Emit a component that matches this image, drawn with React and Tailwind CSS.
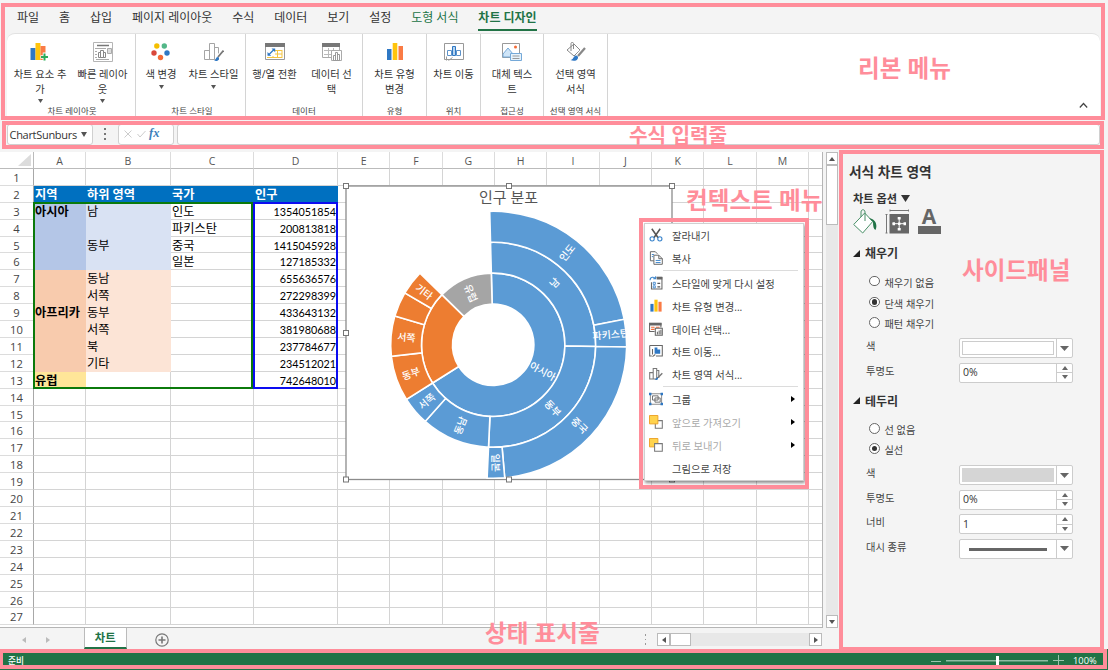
import { Fragment } from "react";

const TABS = ["파일", "홈", "삽입", "페이지 레이아웃", "수식", "데이터", "보기", "설정", "도형 서식", "차트 디자인"];

const COLUMNS = [
  { name: "A", width: 52 },
  { name: "B", width: 85 },
  { name: "C", width: 83 },
  { name: "D", width: 84 },
  { name: "E", width: 52.35 },
  { name: "F", width: 52.35 },
  { name: "G", width: 52.35 },
  { name: "H", width: 52.35 },
  { name: "I", width: 52.35 },
  { name: "J", width: 52.35 },
  { name: "K", width: 52.35 },
  { name: "L", width: 52.35 },
  { name: "M", width: 52.35 },
  { name: "", width: 14.3 },
];

const CELLS = {
  2: ["지역", "하위 영역", "국가", "인구"],
  3: ["아시아", "남", "인도", "1354051854"],
  4: ["", "", "파키스탄", "200813818"],
  5: ["", "동부", "중국", "1415045928"],
  6: ["", "", "일본", "127185332"],
  7: ["", "동남", "", "655636576"],
  8: ["", "서쪽", "", "272298399"],
  9: ["아프리카", "동부", "", "433643132"],
  10: ["", "서쪽", "", "381980688"],
  11: ["", "북", "", "237784677"],
  12: ["", "기타", "", "234512021"],
  13: ["유럽", "", "", "742648010"],
};

const ROWS = Array.from({ length: 27 }, (_, i) => i + 1);

function cellStyle(row, col) {
  if (row === 2 && col < 4) return "bg-[#0070c0] border-[#0070c0] text-white font-bold";
  if (row > 2 && row < 7 && col === 0) return "bg-[#b4c6e7] border-[#b4c6e7] font-bold";
  if (row > 2 && row < 7 && col === 1) return "bg-[#d9e2f3] border-[#d9e2f3]";
  if (row > 6 && row < 13 && col === 0) return "bg-[#f8cbad] border-[#f8cbad] font-bold";
  if (row > 6 && row < 13 && col === 1) return "bg-[#fce4d6] border-[#fce4d6]";
  if (row === 13 && col === 0) return "bg-[#ffe699] border-[#ffe699] font-bold";
  return "border-[#d4d4d4]";
}

/* ---------- ribbon icons ---------- */

const Icon = ({ size = 20, children }) => (
  <svg width={size} height={size} viewBox="0 0 20 20" fill="none" className="block shrink-0">
    {children}
  </svg>
);

const AddElementIcon = () => (
  <Icon>
    <path d="M.500 6h5v12h-5z" fill="#2f78c4" />
    <path d="M5.500 1h5v17h-5z" fill="#ffc40c" />
    <path d="M10.500 4h5v14h-5z" fill="#fa7b45" />
    <path d="M14.500 10.500v9M10.500 15h9" stroke="#fff" strokeWidth="3.500" />
    <path d="M14.500 11.500v7M11 15h7" stroke="#2eab5a" strokeWidth="2" />
  </Icon>
);

const QuickLayoutIcon = () => (
  <Icon>
    <path d="M.5.5h19v19H.5z" stroke="#b5b5b5" fill="#fff" />
    <path d="M4 3.500h12" stroke="#777" strokeWidth="1.500" />
    <path d="M2 6.500h11M2 9.500h2M2 12.500h2M2 15.500h2M3 17.500h13" stroke="#aaa" />
    <path d="M5.500 10.500h2v5h-2zM7.500 8.500h3v7h-3zM10.500 10.500h2v5h-2z" stroke="#888" />
    <path d="M14.500 6.500h4v5h-4z" stroke="#aaa" fill="#ddd" />
  </Icon>
);

const ColorsIcon = () => (
  <Icon>
    <circle cx="5.800" cy="4" r="2.700" fill="#f5bf00" />
    <circle cx="13.300" cy="4" r="2.700" fill="#52b788" />
    <circle cx="3" cy="11" r="2.700" fill="#d9483b" />
    <circle cx="16" cy="11" r="2.700" fill="#2f78c4" />
    <circle cx="9.500" cy="15.500" r="2.700" fill="#f46a35" />
  </Icon>
);

const BarsOutline = () => (
  <path d="M.5 8.500h5v9h-5zM5.500 1.500h5v16h-5zM10.500 5.500h4v12h-4z" stroke="#a5a5a5" fill="#fff" />
);

const ChartStyleIcon = ({ size }) => (
  <Icon size={size}>
    <BarsOutline />
    <path d="M19.500 8.500 14 15" stroke="#fff" strokeWidth="4" />
    <path d="M19.500 8.500 14 15" stroke="#777" strokeWidth="1.800" />
    <path d="M10 18.500c2 0 1.500-3 3.500-3.500 2 0 2 3 0 3.700-1 .5-2.500.3-3.500-.2z" fill="#2f78c4" />
  </Icon>
);

const SwitchRowIcon = () => (
  <Icon>
    <path d="M.5 1.500h19v16H.5z" stroke="#999" fill="#fff" />
    <path d="M0 1h20v4H0z" fill="#777" />
    <path d="M6 8.500h11M6 12h11M2 15.500h15M8 8v8M12.500 8v8M17 8v8" stroke="#f5c542" />
    <path d="M2.500 6.500h7.500V14H2.500z" fill="#fff" />
    <path d="m3.500 13 5.500-5.500" stroke="#2f78c4" strokeWidth="1.300" />
    <path d="M6.500 6.500h3.700v3.700zM2.500 10v3.700h3.700z" fill="#2f78c4" />
  </Icon>
);

const SelectDataIcon = () => (
  <Icon>
    <path d="M.5 1.500h17v14H.5z" stroke="#aaa" fill="#fff" />
    <path d="M0 1h18v4H0z" fill="#777" />
    <path d="M2 8.500h14M2 12.500h8M6.500 6v9M11.500 6v4" stroke="#bbb" />
    <path d="M9.500 8.500h10v10h-10z" fill="#fff" stroke="#aaa" />
    <path d="M11.500 13.500h2v5h-2zM13.500 10.500h2v8h-2zM15.500 12.500h2v6h-2z" stroke="#999" />
  </Icon>
);

const ChartTypeIcon = ({ size }) => (
  <Icon size={size}>
    <path d="M2 7h4.500v11H2z" fill="#2f78c4" />
    <path d="M7.700 1h4.600v17H7.700z" fill="#ffc40c" />
    <path d="M13.500 4H18v14h-4.500z" fill="#fa7b45" />
  </Icon>
);

const MoveChartIcon = ({ size }) => (
  <Icon size={size}>
    <path d="M.5 1.500h19v16H.5z" stroke="#999" fill="#fff" />
    <path d="M3.500 8.500h4v5h-4zM12.500 8.500h4v5h-4z" fill="#fff" stroke="#5d92c9" />
    <path d="M8.500 4.500h3v9h-3z" fill="#b5d3ef" stroke="#2f78c4" />
    <path d="M2.500 14.500v4M4.500 18.500l4-3" stroke="#999" />
  </Icon>
);

const AltTextIcon = () => (
  <Icon>
    <path d="M.5 1.500h17v14H.5z" stroke="#999" fill="#fff" />
    <path d="m1 12 5-6 5 6v3H1z" fill="#cfe5f8" stroke="#75a9d8" />
    <circle cx="13.500" cy="5" r="1.500" fill="#f46a35" />
    <path d="M8.500 11.500h11v7h-11z" fill="#e5f2fc" stroke="#75a9d8" />
    <path d="M10.500 14h7M10.500 16.500h7" stroke="#999" />
  </Icon>
);

const FormatSelectionIcon = () => (
  <Icon>
    <path d="m1 8 7-6 6 6-6 6z" fill="#fff" stroke="#888" />
    <path d="M5 9V1.500C5 0 7.500 0 7.500 1.500V7" stroke="#888" />
    <path d="m18.500 6-7 8" stroke="#fff" strokeWidth="4" />
    <path d="m19 6-7 8" stroke="#888" strokeWidth="2.200" />
    <path d="M4.500 18c3 0 2.500-4 5.500-4.500 3 .5 2.500 4 0 5-2 .7-4 .3-5.500-.5z" fill="#2f78c4" />
  </Icon>
);

/* ---------- context menu icons ---------- */

const CutIcon = () => (
  <Icon size={14}>
    <path d="m4 1 9 13M16 1 7 14" stroke="#555" strokeWidth="2.200" />
    <circle cx="4.500" cy="15.500" r="3" stroke="#3d86cc" strokeWidth="1.600" />
    <circle cx="15.500" cy="15.500" r="3" stroke="#3d86cc" strokeWidth="1.600" />
  </Icon>
);

const CopyIcon = () => (
  <Icon size={14}>
    <path d="M7 14H2V1h7l3 3" stroke="#666" strokeWidth="1.400" />
    <path d="M7 6h7l5 5v8H7z" fill="#fff" stroke="#666" strokeWidth="1.400" />
    <path d="M14 6v5h5" stroke="#666" strokeWidth="1.400" />
    <path d="M9.500 13.500h7M9.500 16.500h7M4 5h3M4 8h2" stroke="#3d86cc" strokeWidth="1.400" />
  </Icon>
);

const ResetStyleIcon = () => (
  <Icon size={14}>
    <path d="M11 2h7.500v16.500h-15V9" stroke="#666" strokeWidth="1.500" />
    <path d="M11 1h8v4h-8z" fill="#666" />
    <path d="M1.500 6c0-5 6-5.500 7.500-2M9.500.5V4H6" stroke="#3d86cc" strokeWidth="1.500" />
    <path d="M6 9h3v3H6zM6 14h3v3H6z" stroke="#3d86cc" strokeWidth="1.300" />
    <path d="M12 10.500h4M12 15.500h4" stroke="#555" strokeWidth="1.500" />
  </Icon>
);

const MenuDataIcon = () => (
  <Icon size={14}>
    <path d="M8 13.500H.8V2H17v6" stroke="#666" strokeWidth="1.500" />
    <path d="M0 1h18v4H0z" fill="#666" />
    <path d="M3 7.500h5M3 10.500h5M10 7.500h5" stroke="#f46a35" strokeWidth="1.600" />
    <path d="M9 9h10v10H9z" fill="#fff" stroke="#666" strokeWidth="1.500" />
    <path d="M12 18v-4M14.500 18v-6M17 18v-7" stroke="#666" strokeWidth="1.500" />
  </Icon>
);

const MenuMoveIcon = () => (
  <Icon size={14}>
    <path d="M1 2h18v15H10M4 17H1V2" stroke="#666" strokeWidth="1.500" />
    <path d="M8 5h4v3h4v6H8z" fill="#2f78c4" />
    <path d="M5 7v8M5 18l4-3" stroke="#666" strokeWidth="1.500" />
  </Icon>
);

const MenuFormatIcon = () => (
  <Icon size={14}>
    <path d="M1 8h5v9H1zM6 2h5v15H6zM11 5h3v10h-3z" stroke="#777" strokeWidth="1.500" />
    <path d="m19 9-6 6" stroke="#777" strokeWidth="2" />
    <path d="M8 17.500c2 0 2-2.500 4-2.500 2 .5 1 3-1 3.500-1 .2-2-.2-3-1z" fill="#2f78c4" />
  </Icon>
);

const GroupIcon = () => (
  <Icon size={14}>
    <path d="M2 2.500h16v15H2z" stroke="#777" strokeWidth="1.200" />
    <path d="M5 5.500h8v6H5zM8.500 8.500H16v6H8.500z" stroke="#666" strokeWidth="1.300" />
    <path d="M0 1h3.500v3.500H0zM16.500 1H20v3.500h-3.500zM0 15.500h3.500V19H0zM16.500 15.500H20V19h-3.500z" fill="#2f78c4" />
  </Icon>
);

const LayerIcon = ({ back }) => (
  <Icon size={14}>
    {back ? (
      <>
        <path d="M.7.700h12v12H.7z" fill="#ffd34d" stroke="#eda42b" strokeWidth="1.400" />
        <path d="M8 8h11v11H8z" fill="#fff" stroke="#777" strokeWidth="1.500" />
      </>
    ) : (
      <>
        <path d="M9 8h10v11H9z" fill="#fff" stroke="#777" strokeWidth="1.500" />
        <path d="M.7.700h12v12H.7z" fill="#ffd34d" stroke="#eda42b" strokeWidth="1.400" />
      </>
    )}
  </Icon>
);

const Triangle = ({ dir = "down", w = 6, h = 4, color = "#555" }) => {
  const points = { down: "0,0 10,0 5,10", up: "0,10 10,10 5,0", left: "10,0 10,10 0,5", right: "0,0 0,10 10,5" };
  return (
    <svg width={w} height={h} viewBox="0 0 10 10" preserveAspectRatio="none" className="block shrink-0">
      <polygon points={points[dir]} fill={color} />
    </svg>
  );
};

/* ---------- ribbon ---------- */

const GROUPS = [
  {
    label: "차트 레이아웃",
    style: "w-[129px] pl-0.5",
    items: [
      { icon: <AddElementIcon />, lines: ["차트 요소 추", "가"], arrow: true, style: "w-[62px]" },
      { icon: <QuickLayoutIcon />, lines: ["빠른 레이아", "웃"], arrow: true, style: "w-[63px]" },
    ],
  },
  {
    label: "차트 스타일",
    style: "w-[110px] pl-[3px]",
    items: [
      { icon: <ColorsIcon />, lines: ["색 변경"], arrow: true, style: "w-[44px]" },
      { icon: <ChartStyleIcon />, lines: ["차트 스타일"], arrow: true, style: "w-[61px]" },
    ],
  },
  {
    label: "데이터",
    style: "w-[117px]",
    items: [
      { icon: <SwitchRowIcon />, lines: ["행/열 전환"], style: "w-[57px]" },
      { icon: <SelectDataIcon />, lines: ["데이터 선", "택"], style: "w-[57px]" },
    ],
  },
  { label: "유형", style: "w-[64px]", items: [{ icon: <ChartTypeIcon />, lines: ["차트 유형", "변경"], style: "w-[63px]" }] },
  { label: "위치", style: "w-[54px]", items: [{ icon: <MoveChartIcon />, lines: ["차트 이동"], style: "w-[53px]" }] },
  { label: "접근성", style: "w-[63px]", items: [{ icon: <AltTextIcon />, lines: ["대체 텍스", "트"], style: "w-[62px]" }] },
  {
    label: "선택 영역 서식",
    style: "w-[64px]",
    items: [{ icon: <FormatSelectionIcon />, lines: ["선택 영역", "서식"], style: "w-[63px]" }],
  },
];

function Ribbon() {
  return (
    <>
      <nav className="flex h-[33px] shrink-0 gap-[19.900px] pt-[9px] pl-[17px] text-[12px] leading-[18px]">
        {TABS.map((tab, i) => (
          <span
            key={tab}
            className={`h-[22px] whitespace-nowrap ${
              i === 9 ? "border-b-2 border-[#217346] font-bold text-[#217346]" : i === 8 ? "text-[#217346]" : "text-[#333]"
            }`}
          >
            {tab}
          </span>
        ))}
      </nav>
      <div className="mr-[8px] ml-[7px] flex h-[83px] shrink-0 rounded-t-lg border-t border-[#e2e2e2] bg-white">
        {GROUPS.map((group) => (
          <div key={group.label} className={`flex flex-col justify-between border-r border-[#d4d4d4] ${group.style}`}>
            <div className="flex pt-[8px]">
              {group.items.map((item) => (
                <div key={item.lines[0]} className={`flex flex-col items-center ${item.style}`}>
                  {item.icon}
                  <div className="mt-[5px] text-center text-[10.3px] leading-[14.5px] whitespace-nowrap text-[#333]">
                    {item.lines.map((line) => (
                      <div key={line}>{line}</div>
                    ))}
                  </div>
                  {item.arrow && (
                    <div className="mt-[3px]">
                      <Triangle w={5} h={4} />
                    </div>
                  )}
                </div>
              ))}
            </div>
            <div className="-mt-3 h-[10px] text-center text-[8.5px] leading-[10px] whitespace-nowrap text-[#444]">{group.label}</div>
          </div>
        ))}
        <div className="flex flex-1 items-end justify-end pr-[12.500px] pb-[7px]">
          <svg width="9" height="7" viewBox="0 0 9 7" fill="none">
            <path d="m.8 5.500 3.700-4 3.700 4" stroke="#444" strokeWidth="1.200" />
          </svg>
        </div>
      </div>
    </>
  );
}

function FormulaBar() {
  return (
    <div className="flex h-[36px] shrink-0 items-center pr-[8px] pl-[7px]">
      <div className="flex h-[21px] w-[86px] items-center justify-between rounded-[3px] border border-[#d0d0d0] bg-white pr-[5px] pl-[1.500px]">
        <span className="pt-[2px] text-[11px] leading-[16px] tracking-[-0.3px] whitespace-nowrap text-[#333]">ChartSunburs</span>
        <Triangle w={6} h={5} />
      </div>
      <div className="flex w-[23px] flex-col items-center gap-[3px]">
        <i className="size-[2px] bg-[#777]" />
        <i className="size-[2px] bg-[#777]" />
        <i className="size-[2px] bg-[#777]" />
      </div>
      <div className="ml-[2px] flex h-[21px] w-[56px] items-center gap-[5px] rounded-[3px] border border-[#d0d0d0] bg-white pl-[5px]">
        <svg width="8" height="8" viewBox="0 0 8 8" stroke="#ccc">
          <path d="m.5.5 7 7m0-7-7 7" />
        </svg>
        <svg width="9" height="8" viewBox="0 0 9 8" fill="none" stroke="#ccc">
          <path d="m.5 4 2.500 3 5.500-6" />
        </svg>
        <span className="-mt-px -ml-0.5 font-['Liberation_Serif',serif] text-[12.500px] font-bold italic text-[#3c7fbb]">fx</span>
      </div>
      <div className="ml-[3px] h-[21px] flex-1 rounded-[3px] border border-[#d0d0d0] bg-white" />
    </div>
  );
}

/* ---------- sheet ---------- */

function Grid() {
  return (
    <div className="h-full w-[823px] overflow-hidden border-r border-b border-[#b5b5b5] bg-white">
      <div className="flex h-[16.9px] text-[10.5px] leading-[18px] text-[#555]">
        <div className="flex w-[34px] shrink-0 items-end justify-end border-r border-b border-[#bbb] pr-[2px] pb-[2px]">
          <svg width="13" height="12" viewBox="0 0 13 12">
            <path d="M13 0v12H0z" fill="#dcdcdc" />
          </svg>
        </div>
        {COLUMNS.map((col, i) => (
          <div key={i} className="shrink-0 border-r border-b border-r-[#dcdcdc] border-b-[#bbb] text-center" style={{ width: col.width }}>
            {col.name}
          </div>
        ))}
      </div>
      {ROWS.map((row) => (
        <div key={row} className="flex h-[16.92px] text-black">
          <div className="w-[34px] shrink-0 border-r border-b border-r-[#a8a8a8] border-b-[#dcdcdc] text-center text-[11.2px] leading-[18px] text-[#444]">
            {row}
          </div>
          {COLUMNS.map((col, i) => (
            <div
              key={i}
              className={`shrink-0 border-r border-b whitespace-nowrap ${cellStyle(row, i)} ${
                i === 3 && row > 2
                  ? "pr-[1px] text-right font-['Lato','Noto_Sans_CJK_KR',sans-serif] text-[10.8px] leading-[18px]"
                  : "pl-[1px] text-[12.2px] leading-[18px]"
              }`}
              style={{ width: col.width }}
            >
              {CELLS[row]?.[i]}
            </div>
          ))}
        </div>
      ))}
    </div>
  );
}

/* ---------- sunburst ---------- */

const BLUE = "#5b9bd5";
const ORANGE = "#ed7d31";
const RADII = [40.7, 71.7, 102.5, 133.5];
const TOTAL = 6055.6;

// ring, start and end on the running total (millions), fill, label
const SLICES = [
  [0, 0, 4025.03, BLUE, "아시아"],
  [0, 4025.03, 5312.95, ORANGE, ""],
  [0, 5312.95, 6055.6, "#a5a5a5", "유럽"],
  [1, 0, 1554.86, BLUE, "남"],
  [1, 1554.86, 3097.1, BLUE, "동부"],
  [1, 3097.1, 3752.73, BLUE, "동남"],
  [1, 3752.73, 4025.03, BLUE, "서쪽"],
  [1, 4025.03, 4458.67, ORANGE, "동부"],
  [1, 4458.67, 4840.65, ORANGE, "서쪽"],
  [1, 4840.65, 5078.44, ORANGE, ""],
  [1, 5078.44, 5312.95, ORANGE, "기타"],
  [2, 0, 1354.05, BLUE, "인도"],
  [2, 1354.05, 1554.86, BLUE, "파키스탄"],
  [2, 1554.86, 2969.91, BLUE, "중국"],
  [2, 2969.91, 3097.1, BLUE, "일본"],
];

const toAngle = (value) => (value / TOTAL) * 360 - 1.5;

const polar = (radius, angle) => {
  const rad = ((angle - 90) * Math.PI) / 180;
  return [radius * Math.cos(rad), radius * Math.sin(rad)];
};

function slicePath(ring, from, to) {
  const inner = RADII[ring];
  const outer = RADII[ring + 1];
  const large = to - from > 180 ? 1 : 0;
  return [
    `M${polar(outer, from)}`,
    `A${outer} ${outer} 0 ${large} 1 ${polar(outer, to)}`,
    `L${polar(inner, to)}`,
    `A${inner} ${inner} 0 ${large} 0 ${polar(inner, from)}Z`,
  ].join("");
}

function Sunburst() {
  const handles = [
    [0, 0], [163, 0], [326, 0], [0, 147], [326, 147], [0, 293.5], [163, 293.5], [326, 293.5],
  ];
  return (
    <svg width="334" height="302" viewBox="-4 -4 334 302" className="absolute top-[30px] left-[342px]">
      <rect x="0" y="0" width="326" height="293.5" fill="#fff" stroke="#8c8c8c" strokeWidth="1.300" />
      <text x="162.500" y="16.500" textAnchor="middle" fontSize="15" fill="#555">
        인구 분포
      </text>
      <g transform="translate(147.200 158.800)">
        {SLICES.map(([ring, start, end, fill], i) => (
          <path key={i} d={slicePath(ring, toAngle(start), toAngle(end))} fill={fill} stroke="#fff" strokeWidth="1.600" />
        ))}
        {SLICES.map(([ring, start, end, , label], i) => {
          const mid = (toAngle(start) + toAngle(end)) / 2;
          const [x, y] = polar((RADII[ring] + RADII[ring + 1]) / 2, mid);
          return (
            <text
              key={i}
              transform={`translate(${x} ${y}) rotate(${mid < 180 ? mid - 90 : mid + 90})`}
              y="3.700"
              textAnchor="middle"
              fontSize="10"
              fill="#fff"
              className="font-['Noto_Sans_CJK_KR',sans-serif] font-medium"
            >
              {label}
            </text>
          );
        })}
      </g>
      {handles.map(([x, y]) => (
        <rect key={`${x}-${y}`} x={x - 2.5} y={y - 2.5} width="5" height="5" fill="#fff" stroke="#777" />
      ))}
    </svg>
  );
}

/* ---------- context menu ---------- */

const MENU = [
  [
    { text: "잘라내기", icon: <CutIcon /> },
    { text: "복사", icon: <CopyIcon /> },
  ],
  [
    { text: "스타일에 맞게 다시 설정", icon: <ResetStyleIcon /> },
    { text: "차트 유형 변경...", icon: <ChartTypeIcon size={14} /> },
    { text: "데이터 선택...", icon: <MenuDataIcon /> },
    { text: "차트 이동...", icon: <MenuMoveIcon /> },
    { text: "차트 영역 서식...", icon: <MenuFormatIcon /> },
  ],
  [
    { text: "그룹", icon: <GroupIcon />, sub: true },
    { text: "앞으로 가져오기", icon: <LayerIcon />, sub: true, disabled: true },
    { text: "뒤로 보내기", icon: <LayerIcon back />, sub: true, disabled: true },
    { text: "그림으로 저장" },
  ],
];

function ContextMenu() {
  return (
    <div className="absolute top-[71px] left-[644px] w-[160px] border border-[#d0d0d0] bg-white shadow-[1px_2px_3px_rgba(0,0,0,0.45)]">
      {MENU.map((section, i) => (
        <Fragment key={i}>
          {i > 0 && <div className="mr-[5px] ml-[18px] h-[2px] border-t border-[#dcdcdc]" />}
          {section.map((item) => (
            <div key={item.text} className="flex h-[22.900px] items-center pr-[8px] pb-px pl-[4px]">
              <div className="w-[14px]">{item.icon}</div>
              <span
                className={`ml-[9px] flex-1 pt-[2px] text-[10.3px] leading-[14px] whitespace-nowrap ${
                  item.disabled ? "text-[#a9a9a9]" : "text-[#444]"
                }`}
              >
                {item.text}
              </span>
              {item.sub && <Triangle dir="right" w={4} h={6} color="#000" />}
            </div>
          ))}
        </Fragment>
      ))}
    </div>
  );
}

function VerticalScroll() {
  return (
    <div className="ml-[3px] flex w-[12px] flex-col bg-[#e8e8e8]">
      <div className="flex h-[13px] items-center justify-center border border-[#bbb] bg-white">
        <Triangle dir="up" w={6} h={4} />
      </div>
      <div className="h-[60px] border border-[#bbb] bg-white" />
      <div className="flex-1" />
      <div className="flex h-[13px] items-center justify-center border border-[#bbb] bg-white">
        <Triangle w={6} h={4} />
      </div>
    </div>
  );
}

function SheetTabs() {
  return (
    <div className="flex h-[21px] shrink-0 items-center bg-[#f4f4f4]">
      <div className="flex w-[83.500px] items-center gap-[20px] pt-[2px] pl-[22px]">
        <Triangle dir="left" w={4} h={6} color="#bbb" />
        <Triangle dir="right" w={4} h={6} color="#bbb" />
      </div>
      <div className="h-[21px] w-[43.500px] border-x border-b-2 border-x-[#bbb] border-b-[#217346] bg-white text-center text-[11.3px] leading-[20px] font-bold text-[#217346]">
        차트
      </div>
      <svg width="14" height="14" viewBox="0 0 14 14" fill="none" stroke="#777" className="ml-[27.500px] mt-[2px]">
        <circle cx="7" cy="7" r="6.200" strokeWidth="1.200" />
        <path d="M7 3.500v7M3.500 7h7" strokeWidth="1.600" />
      </svg>
      <div className="flex-1" />
      <div className="mr-[11px] mt-[2px] flex flex-col gap-[3px]">
        <i className="size-[1.500px] bg-[#999]" />
        <i className="size-[1.500px] bg-[#999]" />
        <i className="size-[1.500px] bg-[#999]" />
      </div>
      <div className="mt-[2px] mr-[16px] flex h-[13px] w-[165px] bg-[#e8e8e8]">
        <div className="flex w-[13px] items-center justify-center border border-[#bbb] bg-white">
          <Triangle dir="left" w={4} h={6} />
        </div>
        <div className="w-[21px] border border-[#bbb] bg-white" />
        <div className="flex-1" />
        <div className="flex w-[13px] items-center justify-center border border-[#bbb] bg-white">
          <Triangle dir="right" w={4} h={6} />
        </div>
      </div>
    </div>
  );
}

/* ---------- side panel ---------- */

const Radio = ({ label, checked, style }) => (
  <div className={`flex items-center gap-[5px] pl-[20px] ${style}`}>
    <span className="-mt-px flex size-[10.500px] items-center justify-center rounded-full border border-[#666] bg-white">
      {checked && <span className="size-[5.500px] rounded-full bg-[#333]" />}
    </span>
    <span className="pt-[2px] text-[10.2px] leading-[14px] text-[#444]">{label}</span>
  </div>
);

const Field = ({ label, spinner, children, style = "h-[24.500px]" }) => (
  <div className={`flex pl-[17px] ${style}`}>
    <span className="w-[93px] pt-[1px] text-[10.3px] leading-[15px] text-[#444]">{label}</span>
    <div className="flex h-[20px] w-[114px] rounded-[2px] border border-[#ccc] bg-white">
      <div className="flex flex-1 items-center text-[10.5px] text-[#333]">{children}</div>
      {spinner ? (
        <div className="flex w-[16px] flex-col border-l border-[#ccc]">
          <div className="flex flex-1 items-center justify-center border-b border-[#ccc]">
            <Triangle dir="up" w={6} h={4} color="#666" />
          </div>
          <div className="flex flex-1 items-center justify-center">
            <Triangle w={6} h={4} color="#666" />
          </div>
        </div>
      ) : (
        <div className="flex w-[16px] items-center justify-center border-l border-[#ccc]">
          <Triangle w={9} h={5} color="#666" />
        </div>
      )}
    </div>
  </div>
);

const SectionTitle = ({ children }) => (
  <div className="flex h-[18px] items-center gap-[5px] pl-[4px]">
    <svg width="7" height="7" viewBox="0 0 7 7" className="-mt-0.5">
      <path d="M7 0v7H0z" fill="#222" />
    </svg>
    <span className="text-[12px] leading-[18px] font-bold text-[#333]">{children}</span>
  </div>
);

function SidePanel() {
  return (
    <aside className="ml-[1px] flex w-[265px] flex-col bg-[#f4f4f4] pt-[10px] pl-[10px]">
      <h2 className="h-[20px] text-[13.7px] leading-[20px] font-bold text-[#333]">서식 차트 영역</h2>
      <div className="mt-[7px] flex h-[18px] items-center gap-[4px] pl-[4px]">
        <span className="pt-px text-[11.2px] leading-[18px] font-bold text-[#333]">차트 옵션</span>
        <Triangle w={9} h={7} color="#333" />
      </div>
      <div className="mt-[2px] flex h-[25px] gap-[8px] pl-[4px]">
        <svg width="24" height="25" viewBox="0 0 24 25" fill="none">
          <path d="m.7 15.500 11-11.500 8 8.500-10 11.500z" fill="#fff" stroke="#4a9068" />
          <path d="M8 8V3c0-3 4-3 4 0v9" stroke="#4a9068" />
          <path d="M16 9c6 1 9 6 6.500 12-2-1-2.500-4-2.500-8z" fill="#217346" />
        </svg>
        <svg width="24" height="25" viewBox="0 0 24 25" fill="none">
          <path d="M.5 5.500h2M.5 24h2M1.500 5.500V24M5 .5v2M23.500.5v2M5 1.500h18.500" stroke="#777" />
          <path d="M4.500 5H24v19.500H4.500z" fill="#666" />
          <path d="M14.200 8v13M7.500 14.700H21" stroke="#fff" strokeWidth="1" />
          <path d="M12.700 8h3v2.500h-3zM12.700 19h3v2.500h-3zM7.500 13.200H10v3H7.500zM18.500 13.200H21v3h-2.500zM13 13.500h2.500V16H13z" fill="#fff" />
        </svg>
        <div className="flex w-[24px] flex-col items-center">
          <span className="h-[17px] text-[21px] leading-[15px] font-bold text-[#666]">A</span>
          <span className="h-[8px] w-[23px] bg-[#666]" />
        </div>
      </div>
      <div className="mt-[11px]">
        <SectionTitle>채우기</SectionTitle>
      </div>
      <Radio label="채우기 없음" style="mt-[8px] h-[21px]" />
      <Radio label="단색 채우기" checked style="h-[21px]" />
      <Radio label="패턴 채우기" style="h-[20px]" />
      <div className="mt-[5px]">
        <Field label="색">
          <span className="mx-[2px] h-[14px] flex-1 border border-[#ccc] bg-white" />
        </Field>
        <Field label="투명도" spinner>
          <span className="pt-px pl-[3px]">0%</span>
        </Field>
      </div>
      <div className="mt-[5.500px]">
        <SectionTitle>테두리</SectionTitle>
      </div>
      <Radio label="선 없음" style="mt-[8px] h-[20.500px]" />
      <Radio label="실선" checked style="h-[20px]" />
      <div className="mt-[6px]">
        <Field label="색">
          <span className="mx-[2px] h-[14px] flex-1 bg-[#d5d5d5]" />
        </Field>
        <Field label="투명도" spinner>
          <span className="pt-px pl-[3px]">0%</span>
        </Field>
        <Field label="너비" spinner>
          <span className="pt-px pl-[3px]">1</span>
        </Field>
        <Field label="대시 종류">
          <span className="mt-[2px] ml-[9px] h-[2.500px] w-[78px] bg-[#666]" />
        </Field>
      </div>
    </aside>
  );
}

function StatusBar() {
  return (
    <footer className="flex h-[21px] shrink-0 items-center bg-[#217346] pr-[11px] pl-[8px] text-[8.7px] text-white">
      <span className="flex-1 pt-[4px] font-medium">준비</span>
      <span className="mt-[3px] h-px w-[10px] bg-[#9cc4ad]" />
      <span className="mt-[2px] ml-[5px] flex h-[9px] w-[102px] items-center justify-center bg-[linear-gradient(#8fbba2,#8fbba2)] bg-[length:100%_1.500px] bg-center bg-no-repeat">
        <i className="h-[9px] w-[3px] bg-white" />
      </span>
      <svg width="11" height="11" viewBox="0 0 11 11" stroke="#9cc4ad" className="mt-[2px] mr-[9px] ml-[5px]">
        <path d="M5.500 0v11M0 5.500h11" />
      </svg>
      <span className="w-[24px] pt-[3px] text-[9.300px]">100%</span>
    </footer>
  );
}

/* ---------- guide overlay ---------- */

const FRAMES = [
  "top-[3px] left-[1px] h-[117px] w-[1104px]",
  "top-[121px] left-[2px] h-[28px] w-[1102px]",
  "top-[150px] left-[839px] h-[501px] w-[265px]",
  "top-[218px] left-[639px] h-[271px] w-[170px]",
  "top-[649px] left-[-1px] h-[20px] w-[1108px]",
];

const CAPTIONS = [
  { text: "리본 메뉴", style: "top-[52px] left-[858px] text-[23.600px]" },
  { text: "수식 입력줄", style: "top-[119px] left-[629px] text-[20.200px]" },
  { text: "컨텍스트 메뉴", style: "top-[184px] left-[686px] text-[23.600px]" },
  { text: "사이드패널", style: "top-[254px] left-[962px] text-[23.600px]" },
  { text: "상태 표시줄", style: "top-[617px] left-[485px] text-[23.600px]" },
];

function Guides() {
  return (
    <>
      {FRAMES.map((style) => (
        <div key={style} className={`absolute border-4 border-[#ff8d9a] ${style}`} />
      ))}
      {CAPTIONS.map(({ text, style }) => (
        <div key={text} className={`absolute leading-[32px] font-bold whitespace-nowrap text-[#ff8d9a] ${style}`}>
          {text}
        </div>
      ))}
    </>
  );
}

export default function App() {
  return (
    <div className="relative flex h-[670px] w-[1108px] flex-col overflow-hidden bg-[#f4f4f4] font-['Open_Sans','Noto_Sans_CJK_KR',sans-serif]">
      <Ribbon />
      <FormulaBar />
      <div className="flex h-[497px] shrink-0">
        <div className="flex w-[838px] flex-col">
          <div className="relative flex h-[476px] shrink-0">
            <Grid />
            <VerticalScroll />
            <div className="absolute top-[50px] left-[33px] h-[187px] w-[220px] border-2 border-[#0b7a0b]" />
            <div className="absolute top-[50px] left-[253px] h-[187px] w-[85px] border-2 border-[#0c0cf0]" />
            <Sunburst />
            <ContextMenu />
          </div>
          <SheetTabs />
        </div>
        <SidePanel />
      </div>
      <StatusBar />
      <Guides />
    </div>
  );
}
